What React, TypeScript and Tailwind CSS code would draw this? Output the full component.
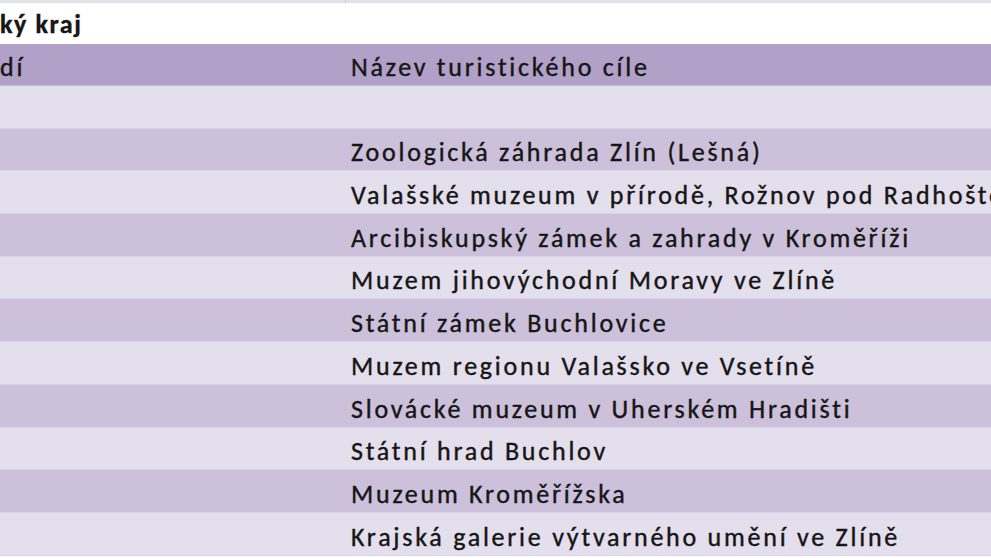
const rows = [
  "",
  "Zoologická záhrada Zlín (Lešná)",
  "Valašské muzeum v přírodě, Rožnov pod Radhoštěm",
  "Arcibiskupský zámek a zahrady v Kroměříži",
  "Muzem jihovýchodní Moravy ve Zlíně",
  "Státní zámek Buchlovice",
  "Muzem regionu Valašsko ve Vsetíně",
  "Slovácké muzeum v Uherském Hradišti",
  "Státní hrad Buchlov",
  "Muzeum Kroměřížska",
  "Krajská galerie výtvarného umění ve Zlíně",
];

export default function App() {
  return (
    <div
      className="w-[991px] h-[558px] overflow-hidden bg-white text-[#161616] [-webkit-text-stroke:0.4px_#161616]"
      style={{ fontFamily: "Carlito, 'Open Sans', sans-serif" }}
    >
      <div className="h-[3px] flex">
        <div className="w-[345px] bg-[#dfe3ea]" />
        <div className="w-px bg-[#c6ccd6]" />
        <div className="flex-1 bg-[#dfe3ea]" />
      </div>
      <div className="h-[41px] flex items-end pb-[7px] text-[26px] font-bold tracking-[1.6px] leading-none whitespace-nowrap">
        ký kraj
      </div>
      <div className="h-[42px] flex items-end pb-[5px] bg-[#b1a0c7] text-[26px] tracking-[2.75px] leading-none whitespace-nowrap border-b border-[#c3b5d4]">
        <div className="w-[351px] shrink-0">dí</div>
        <div>Název turistického cíle</div>
      </div>
      {rows.map((name, i) => (
        <div
          key={i}
          className={
            "h-[42.7px] flex items-end pb-[5px] text-[26px] tracking-[2.75px] leading-none whitespace-nowrap border-b " +
            (i % 2 === 0 ? "bg-[#e4dfec] border-[#d9d1e5]" : "bg-[#ccc0da] border-[#dcd3e6]")
          }
        >
          <div className="w-[351px] shrink-0" />
          <div>{name}</div>
        </div>
      ))}
    </div>
  );
}
